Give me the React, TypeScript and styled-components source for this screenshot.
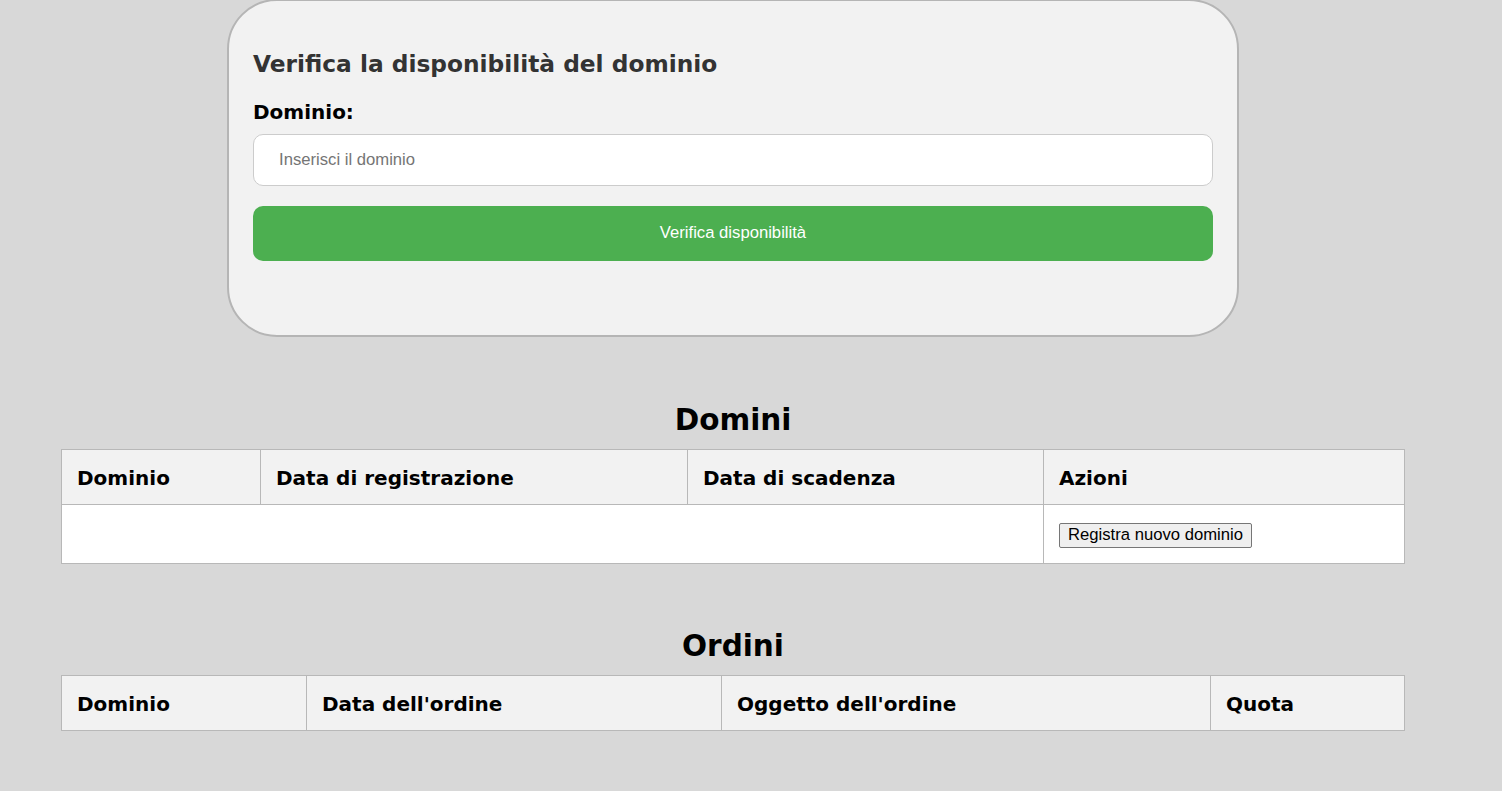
import styled, { createGlobalStyle } from "styled-components";

const GlobalStyle = createGlobalStyle`
  body {
    margin: 0;
    background: #d8d8d8;
    font-family: "DejaVu Sans", Verdana, sans-serif;
  }
`;

interface Column {
  label: string;
  width: number;
}

const domainColumns: Column[] = [
  { label: "Dominio", width: 199 },
  { label: "Data di registrazione", width: 427 },
  { label: "Data di scadenza", width: 356 },
  { label: "Azioni", width: 361 },
];

const orderColumns: Column[] = [
  { label: "Dominio", width: 245 },
  { label: "Data dell'ordine", width: 415 },
  { label: "Oggetto dell'ordine", width: 489 },
  { label: "Quota", width: 194 },
];

function App() {
  return (
    <Page>
      <GlobalStyle />
      <Card>
        <Title>Verifica la disponibilità del dominio</Title>
        <Label htmlFor="domain">Dominio:</Label>
        <Input id="domain" placeholder="Inserisci il dominio" />
        <CheckButton>Verifica disponibilità</CheckButton>
      </Card>

      <Section $gap={66}>
        <SectionTitle>Domini</SectionTitle>
        <Table>
          <colgroup>
            {domainColumns.map((c) => (
              <col key={c.label} style={{ width: c.width }} />
            ))}
          </colgroup>
          <thead>
            <tr>
              {domainColumns.map((c) => (
                <Th key={c.label}>{c.label}</Th>
              ))}
            </tr>
          </thead>
          <tbody>
            <tr>
              <Td colSpan={3} />
              <Td>
                <RegisterButton>Registra nuovo dominio</RegisterButton>
              </Td>
            </tr>
          </tbody>
        </Table>
      </Section>

      <Section $gap={65}>
        <SectionTitle>Ordini</SectionTitle>
        <Table>
          <colgroup>
            {orderColumns.map((c) => (
              <col key={c.label} style={{ width: c.width }} />
            ))}
          </colgroup>
          <thead>
            <tr>
              {orderColumns.map((c) => (
                <Th key={c.label}>{c.label}</Th>
              ))}
            </tr>
          </thead>
        </Table>
      </Section>
    </Page>
  );
}

export default App;

const Page = styled.div`
  width: 1466px;
  padding-bottom: 60px;
`;

const Card = styled.div`
  box-sizing: border-box;
  width: 1012px;
  margin: -1px auto 0;
  padding: 49px 24px 74px;
  background: #f2f2f2;
  border: 2px solid #b5b5b5;
  border-radius: 50px;
  display: flex;
  flex-direction: column;
`;

const Title = styled.h2`
  margin: 0 0 24px;
  font-size: 23.3px;
  line-height: 27px;
  font-weight: bold;
  color: #333;
`;

const Label = styled.label`
  font-size: 20px;
  line-height: 23px;
  font-weight: bold;
  color: #000;
  margin-bottom: 10px;
`;

const Input = styled.input`
  box-sizing: border-box;
  height: 52px;
  padding: 0 25px;
  border: 1px solid #cccccc;
  border-radius: 10px;
  background: #fff;
  font-family: "Liberation Sans", Arial, sans-serif;
  font-size: 16.67px;
  color: #333;
  outline: none;

  &::placeholder {
    color: #757575;
  }
`;

const CheckButton = styled.button`
  margin-top: 20px;
  height: 55px;
  padding-bottom: 2px;
  border: none;
  border-radius: 10px;
  background: #4caf50;
  color: #fff;
  font-family: "Liberation Sans", Arial, sans-serif;
  font-size: 16.67px;
  cursor: pointer;
`;

const Section = styled.section<{ $gap: number }>`
  margin-top: ${(p) => p.$gap}px;
  display: flex;
  flex-direction: column;
  align-items: center;
`;

const SectionTitle = styled.h2`
  margin: 0 0 11px;
  font-size: 29.5px;
  line-height: 35px;
  font-weight: bold;
  color: #000;
`;

const Table = styled.table`
  width: 1343px;
  border-collapse: collapse;
  table-layout: fixed;
`;

const Th = styled.th`
  box-sizing: border-box;
  height: 55px;
  padding: 2px 15px 0;
  text-align: left;
  font-size: 20px;
  font-weight: bold;
  color: #000;
  background: #f2f2f2;
  border: 1px solid #b8b8b8;
`;

const Td = styled.td`
  box-sizing: border-box;
  height: 59px;
  padding: 2px 15px 0;
  background: #fff;
  border: 1px solid #b8b8b8;
`;

const RegisterButton = styled.button`
  height: 25px;
  padding: 0 8px;
  border: 1px solid #767676;
  border-radius: 2px;
  background: #efefef;
  color: #000;
  font-family: "Liberation Sans", Arial, sans-serif;
  font-size: 16.67px;
  line-height: 1;
`;
